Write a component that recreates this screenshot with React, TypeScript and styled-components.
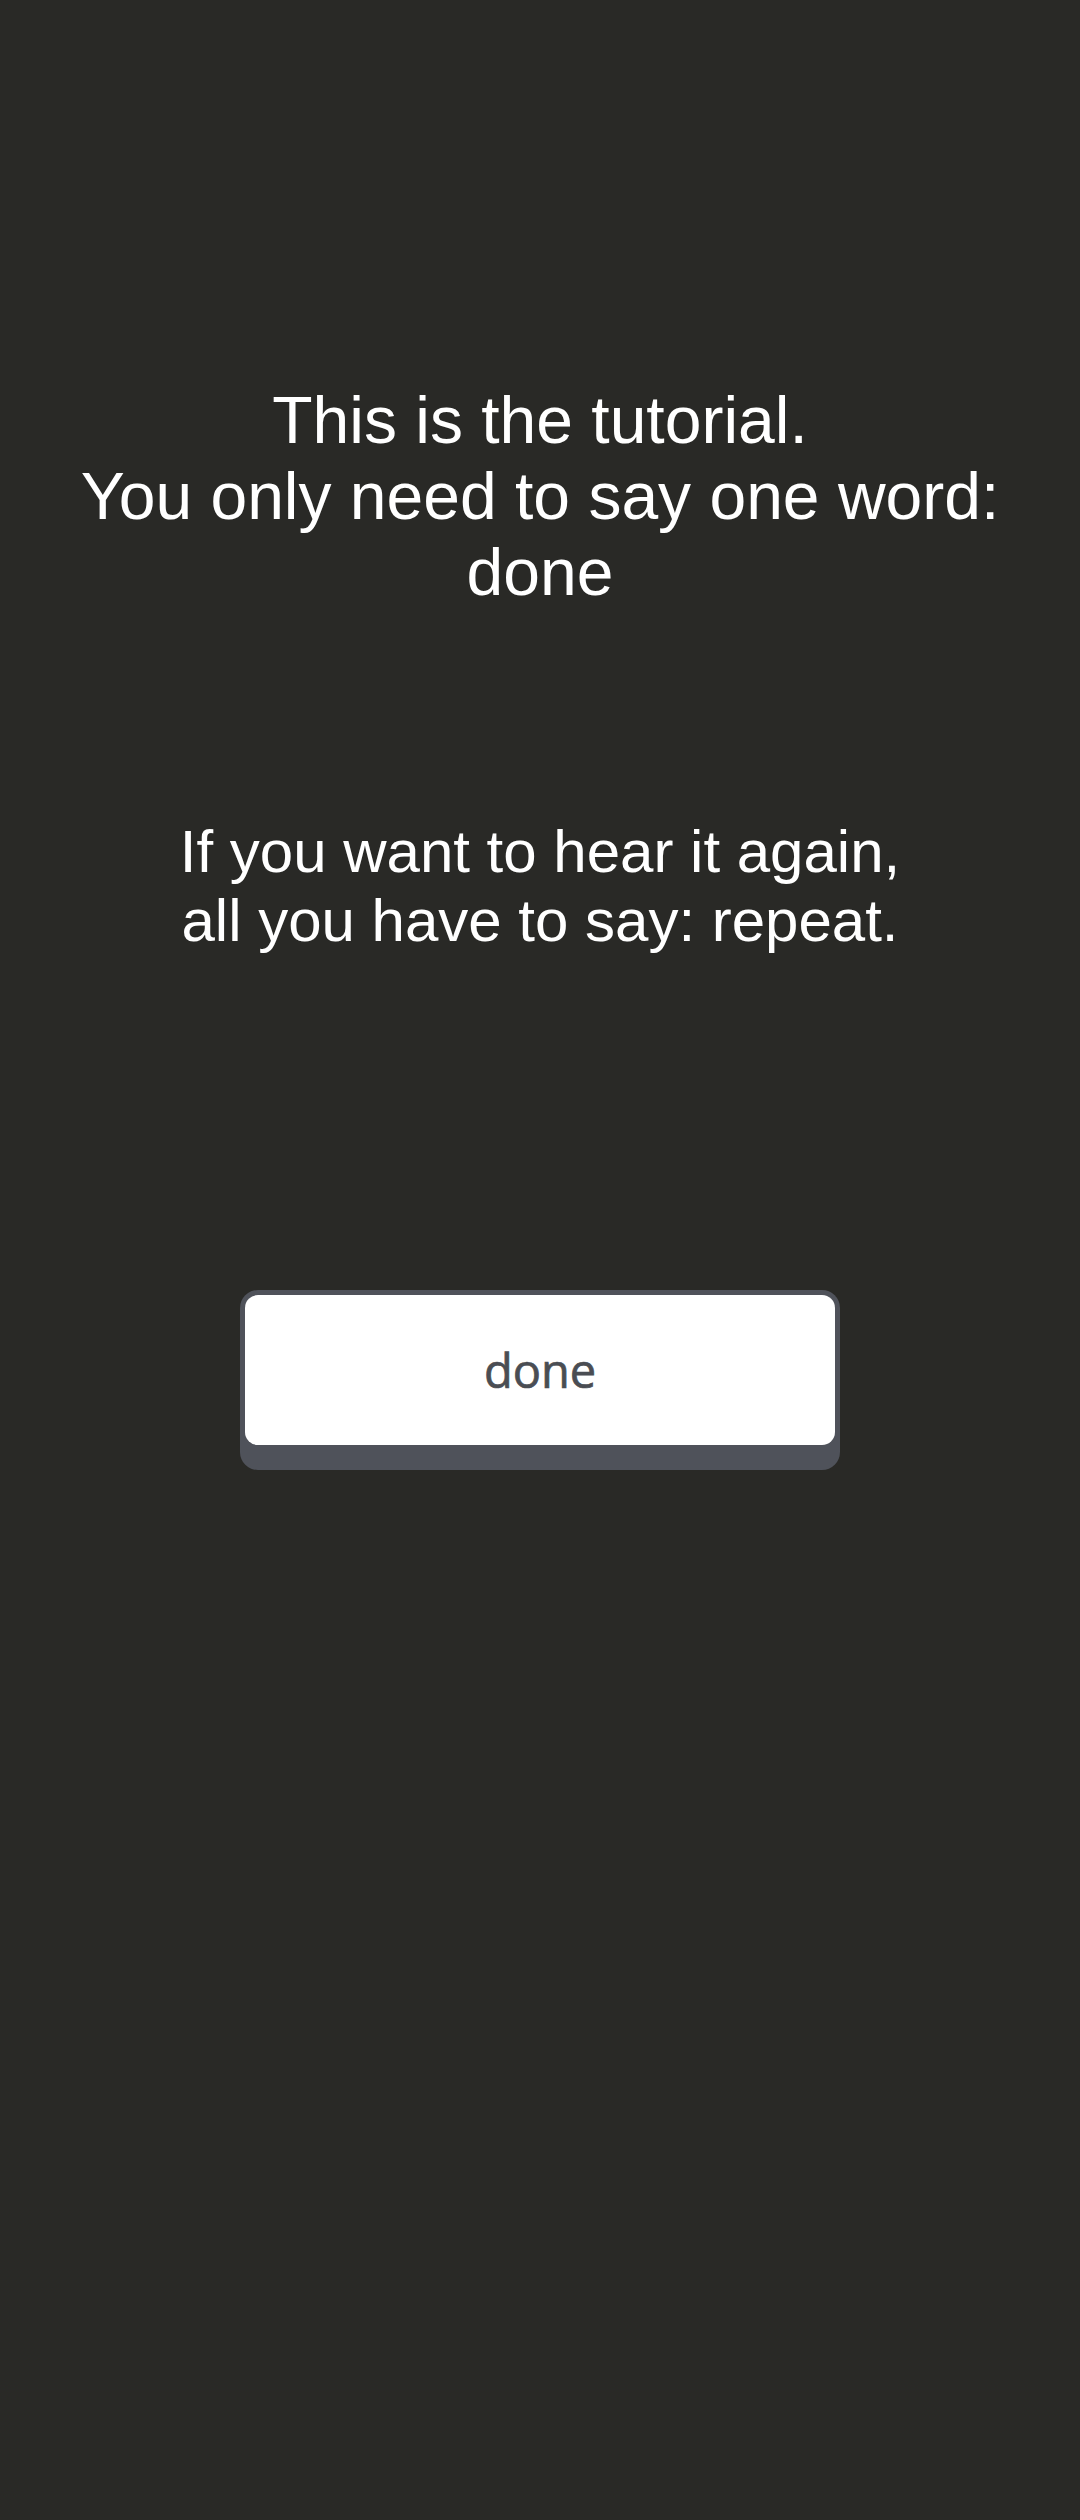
import styled, { createGlobalStyle } from "styled-components"

const GlobalStyle = createGlobalStyle`
    html, body {
        margin: 0;
        padding: 0;
        background: #292926;
    }
`

const Page = styled.main`
    box-sizing: border-box;
    min-height: 2520px;
    padding-top: 382px;
    display: flex;
    flex-direction: column;
    align-items: center;
    background: #292926;
    font-family: "Liberation Sans", Arial, sans-serif;
    color: #ffffff;
`

const Message = styled.p<{ $size: number; $gap: number }>`
    margin: 0 0 ${(p) => p.$gap}px;
    text-align: center;
    font-size: ${(p) => p.$size}px;
    line-height: normal;
`

const KeyButton = styled.button`
    box-sizing: border-box;
    width: 600px;
    height: 180px;
    padding: 5px 5px 25px;
    border: none;
    border-radius: 18px;
    background: #4f525a;
    cursor: pointer;
`

const KeyFace = styled.span`
    display: flex;
    align-items: center;
    justify-content: center;
    height: 100%;
    border-radius: 13px;
    background: #ffffff;
    font-family: "Open Sans", "Noto Sans", sans-serif;
    font-size: 47px;
    font-weight: 400;
    -webkit-text-stroke: 0.7px #4a4d53;
    color: #4a4d53;
`

export default function App() {
    return (
        <>
            <GlobalStyle />
            <Page>
                <Message $size={66} $gap={207}>
                    This is the tutorial.
                    <br />
                    You only need to say one word:
                    <br />
                    done
                </Message>

                <Message $size={60} $gap={335}>
                    If you want to hear it again,
                    <br />
                    all you have to say: repeat.
                </Message>

                <KeyButton type="button">
                    <KeyFace>done</KeyFace>
                </KeyButton>
            </Page>
        </>
    )
}
